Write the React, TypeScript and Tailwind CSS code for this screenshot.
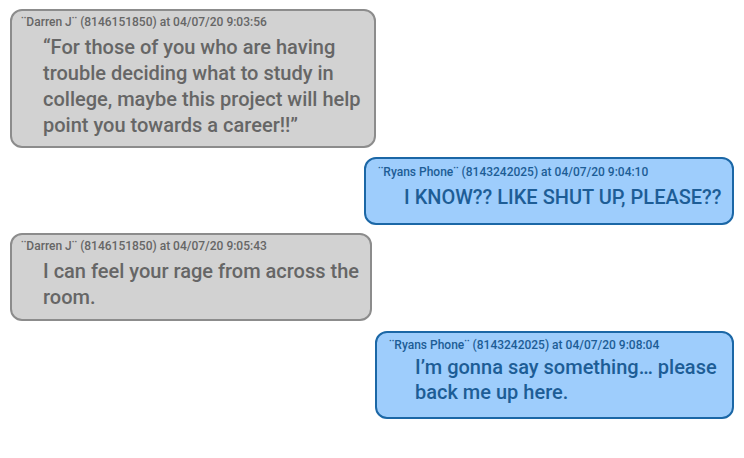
const messages = [
  {
    from: "¨Darren J¨ (8146151850) at 04/07/20 9:03:56",
    text: "“For those of you who are having trouble deciding what to study in college, maybe this project will help point you towards a career!!”",
    mine: false,
    box: "ml-[10px] mt-[9px] w-[366px] pt-[3px] pb-[8px]",
    body: "mt-[4px] leading-[26px]",
  },
  {
    from: "¨Ryans Phone¨ (8143242025) at 04/07/20 9:04:10",
    text: "I KNOW?? LIKE SHUT UP, PLEASE??",
    mine: true,
    box: "ml-[364px] mt-[9px] w-[370px] pt-[5px] pb-[13px]",
    body: "mt-[4px] leading-[26px]",
  },
  {
    from: "¨Darren J¨ (8146151850) at 04/07/20 9:05:43",
    text: "I can feel your rage from across the room.",
    mine: false,
    box: "ml-[10px] mt-[8px] w-[362px] pt-[3px] pb-[9px]",
    body: "mt-[4px] leading-[26px]",
  },
  {
    from: "¨Ryans Phone¨ (8143242025) at 04/07/20 9:08:04",
    text: "I’m gonna say something… please back me up here.",
    mine: true,
    box: "ml-[375px] mt-[10px] w-[359px] pt-[4px] pb-[12px]",
    body: "mt-[2px] leading-[25px]",
  },
];

export default function App() {
  return (
    <div className="h-[458px] w-[744px] overflow-hidden bg-white font-['Roboto',sans-serif]">
      {messages.map((m, i) => (
        <div
          key={i}
          className={`${m.box} rounded-[12px] border-2 pr-[8px] ${
            m.mine
              ? "border-[#1b67a6] bg-[#9ecdfc] pl-[12px] text-[#1d5d96]"
              : "border-[#8c8c8c] bg-[#d2d2d2] pl-[9px] text-[#666666]"
          }`}
        >
          <p className="text-[12px] font-medium leading-[16px]">{m.from}</p>
          <p className={`${m.body} text-[20px] font-medium ${m.mine ? "pl-[26px]" : "pl-[22px]"}`}>
            {m.text}
          </p>
        </div>
      ))}
    </div>
  );
}
